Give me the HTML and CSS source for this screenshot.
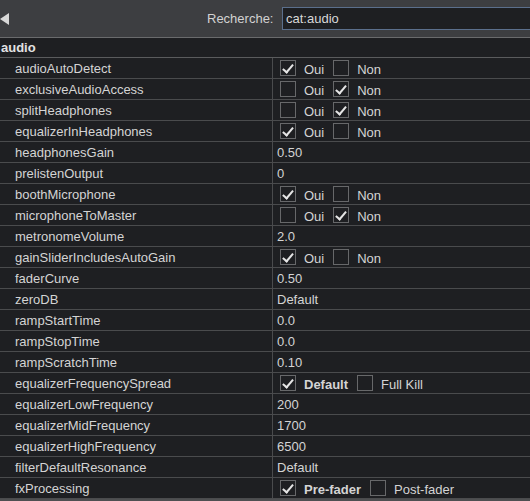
FILE: index.html
```html
<!DOCTYPE html>
<html lang="fr">
<head>
<meta charset="utf-8">
<link rel="stylesheet" href="styles.css">
</head>
<body>
<div class="toolbar">
  <svg class="back" width="9" height="12" viewBox="0 0 9 12"><polygon points="0,6 9,0 9,12" fill="#d8d8d8"/></svg>
  <span class="search-label">Recherche:</span>
  <div class="search-input">cat:audio</div>
</div>
<div class="table">
  <div class="group">audio</div>

  <div class="row"><div class="key">audioAutoDetect</div><div class="val"><span class="cb on"></span><span class="opt">Oui</span><span class="cb"></span><span class="opt">Non</span></div></div>
  <div class="row"><div class="key">exclusiveAudioAccess</div><div class="val"><span class="cb"></span><span class="opt">Oui</span><span class="cb on"></span><span class="opt">Non</span></div></div>
  <div class="row"><div class="key">splitHeadphones</div><div class="val"><span class="cb"></span><span class="opt">Oui</span><span class="cb on"></span><span class="opt">Non</span></div></div>
  <div class="row"><div class="key">equalizerInHeadphones</div><div class="val"><span class="cb on"></span><span class="opt">Oui</span><span class="cb"></span><span class="opt">Non</span></div></div>
  <div class="row"><div class="key">headphonesGain</div><div class="val text">0.50</div></div>
  <div class="row"><div class="key">prelistenOutput</div><div class="val text">0</div></div>
  <div class="row"><div class="key">boothMicrophone</div><div class="val"><span class="cb on"></span><span class="opt">Oui</span><span class="cb"></span><span class="opt">Non</span></div></div>
  <div class="row"><div class="key">microphoneToMaster</div><div class="val"><span class="cb"></span><span class="opt">Oui</span><span class="cb on"></span><span class="opt">Non</span></div></div>
  <div class="row"><div class="key">metronomeVolume</div><div class="val text">2.0</div></div>
  <div class="row"><div class="key">gainSliderIncludesAutoGain</div><div class="val"><span class="cb on"></span><span class="opt">Oui</span><span class="cb"></span><span class="opt">Non</span></div></div>
  <div class="row"><div class="key">faderCurve</div><div class="val text">0.50</div></div>
  <div class="row"><div class="key">zeroDB</div><div class="val text">Default</div></div>
  <div class="row"><div class="key">rampStartTime</div><div class="val text">0.0</div></div>
  <div class="row"><div class="key">rampStopTime</div><div class="val text">0.0</div></div>
  <div class="row"><div class="key">rampScratchTime</div><div class="val text">0.10</div></div>
  <div class="row"><div class="key">equalizerFrequencySpread</div><div class="val"><span class="cb on"></span><span class="opt bold">Default</span><span class="cb"></span><span class="opt">Full Kill</span></div></div>
  <div class="row"><div class="key">equalizerLowFrequency</div><div class="val text">200</div></div>
  <div class="row"><div class="key">equalizerMidFrequency</div><div class="val text">1700</div></div>
  <div class="row"><div class="key">equalizerHighFrequency</div><div class="val text">6500</div></div>
  <div class="row"><div class="key">filterDefaultResonance</div><div class="val text">Default</div></div>
  <div class="row"><div class="key">fxProcessing</div><div class="val"><span class="cb on"></span><span class="opt bold">Pre-fader</span><span class="cb"></span><span class="opt">Post-fader</span></div></div>
</div>
</body>
</html>
```

FILE: styles.css
```css
html, body {
  margin: 0;
  padding: 0;
}
body {
  width: 530px;
  height: 501px;
  overflow: hidden;
  background: #4e4f51;
  font-family: "Liberation Sans", Arial, sans-serif;
  font-size: 13px;
  color: #d4d4d4;
}
.toolbar {
  height: 37px;
  background: #3d3e41;
  border-bottom: 1px solid #6a6b6d;
  display: flex;
  align-items: center;
}
.back {
  flex: none;
  margin-left: 0;
  margin-top: 1px;
}
.search-label {
  margin-left: 198px;
  color: #d2d2d2;
  width: 75px;
}
.search-input {
  margin-left: 0;
  flex: 1;
  height: 21px;
  line-height: 21px;
  background: #1e1f22;
  border: 1px solid #5b6f8c;
  border-right: none;
  padding-left: 3px;
  color: #d8d8d8;
  margin-top: 0;
}
.table {
  background: #1e1f22;
}
.group {
  height: 19px;
  line-height: 19px;
  padding-left: 1px;
  font-weight: bold;
  color: #e2e2e2;
  border-bottom: 1px solid #5a5b5d;
}
.row {
  display: grid;
  grid-template-columns: 273px 1fr;
  height: 20px;
  border-bottom: 1px solid #4a4b4d;
  overflow: hidden;
}
.key {
  border-right: 1px solid #4a4b4d;
  padding-left: 15px;
  line-height: 22px;
  white-space: nowrap;
  overflow: hidden;
}
.val {
  display: flex;
  align-items: center;
  padding-left: 7px;
  white-space: nowrap;
}
.val.text {
  display: block;
  padding-left: 4px;
  line-height: 22px;
}
.cb {
  flex: none;
  box-sizing: border-box;
  width: 16px;
  height: 16px;
  border: 1px solid #67686a;
  background: #1e1f22;
  position: relative;
}
.cb.on::after {
  content: "";
  position: absolute;
  left: 4px;
  top: 1px;
  width: 4px;
  height: 9px;
  border-right: 2px solid #e6e6e6;
  border-bottom: 2px solid #e6e6e6;
  transform: rotate(40deg);
}
.opt {
  margin-left: 8px;
  margin-right: 9px;
  padding-top: 2px;
}
.bold {
  font-weight: bold;
}
```
